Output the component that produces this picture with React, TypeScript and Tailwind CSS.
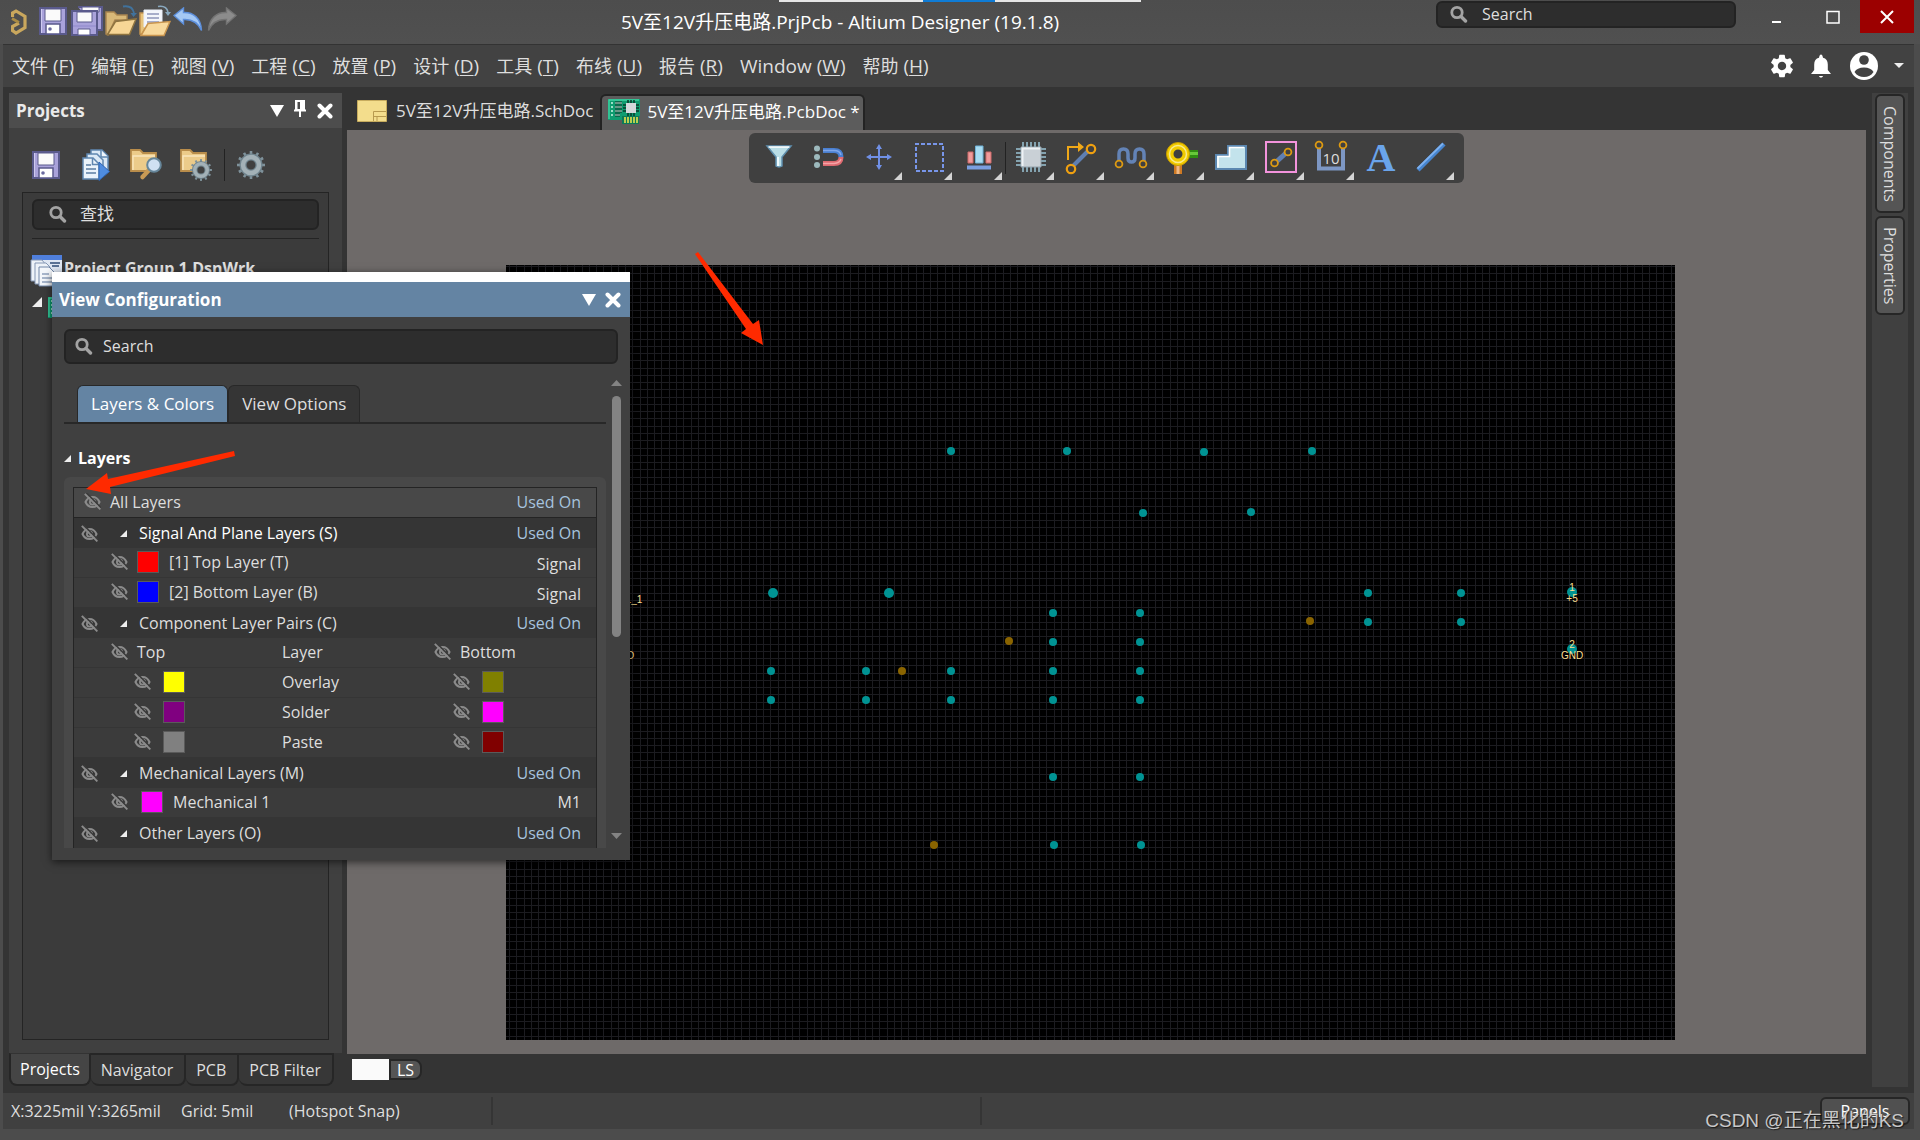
import React from "react";

type Svg = { className?: string };

/* ---------- small shared glyphs ---------- */

const SearchGlyph = ({ className = "" }: Svg) => (
  <svg viewBox="0 0 18 18" className={"h-[18px] w-[18px] shrink-0 " + className} aria-hidden="true">
    <circle cx="7" cy="7.500" r="5.2" fill="none" stroke="#a3a3a3" strokeWidth="2.800" />
    <path d="M11 11.500 15.500 16" stroke="#a3a3a3" strokeWidth="3.4" strokeLinecap="round" />
  </svg>
);

const HiddenEye = () => (
  <button type="button" aria-label="Toggle visibility" className="block shrink-0">
    <svg viewBox="0 0 17 17" className="h-[17px] w-[17px]" aria-hidden="true">
      <path d="M1.5 9C3 5.600 5.500 4 8.500 4S14 5.600 15.500 9C14 12.400 11.500 14 8.500 14S3 12.400 1.500 9Z" fill="none" stroke="#8b8b8b" strokeWidth="2" />
      <circle cx="8.5" cy="9" r="2.600" fill="none" stroke="#8b8b8b" strokeWidth="1.800" />
      <path d="M2.500 0 17 14.600" stroke="#3b3b3b" strokeWidth="1.600" />
      <path d="M.8 .8 16.400 16.400" stroke="#8b8b8b" strokeWidth="1.900" />
    </svg>
  </button>
);

const Expander = ({ className = "h-[7px] w-[7px]" }: Svg) => (
  <svg viewBox="0 0 8 8" className={"shrink-0 " + className} aria-hidden="true">
    <path d="M8 0V8H0Z" fill="#eeeeee" />
  </svg>
);

const DownMark = () => (
  <svg viewBox="0 0 14 12" className="h-3 w-3.5" aria-hidden="true">
    <path d="M0 0H14L7 12Z" fill="#fff" />
  </svg>
);

const CrossMark = () => (
  <svg viewBox="0 0 16 16" className="h-4 w-4" aria-hidden="true">
    <path d="M2.5 2.5 13.5 13.5M13.5 2.5 2.5 13.5" stroke="#fff" strokeWidth="4" strokeLinecap="round" />
  </svg>
);

/* ---------- title bar and panel icons ---------- */

const Logo = () => (
  <svg viewBox="0 0 16 26" className="h-[26px] w-4" aria-hidden="true">
    <path d="M1.500 8V4L5 2 14 7.500V18.500L5 24 1.500 21.500V17.500L8 14" fill="none" stroke="#c9a75d" strokeWidth="3.200" />
    <path d="M1 9.500 8 13.500" fill="none" stroke="#a98b45" strokeWidth="2.600" />
  </svg>
);

const DiskShape = () => (
  <>
    <path d="M1 1H27V27H1Z" fill="#a9a2da" stroke="#5a5a8c" strokeWidth="2" />
    <path d="M2.500 2V26" stroke="#cfcaf0" />
    <path d="M6 2H22V14H6Z" fill="#fafafa" stroke="#5a5a8c" />
    <path d="M7 17H21V27H7Z" fill="#fff" stroke="#5a5a8c" strokeWidth="1.500" />
    <circle cx="11" cy="22" r="1.800" fill="#6a6aa0" />
  </>
);

const Disk = () => (
  <svg viewBox="0 0 28 28" className="h-7 w-7" aria-hidden="true"><DiskShape /></svg>
);

const DiskPair = () => (
  <svg viewBox="0 0 32 30" className="h-[30px] w-8" aria-hidden="true">
    <path d="M7 1H31V24H27" fill="#a9a2da" stroke="#5a5a8c" strokeWidth="2" />
    <path d="M11 1H28V6H11Z" fill="#fafafa" stroke="#5a5a8c" />
    <path d="M1 5H26V29H1Z" fill="#a9a2da" stroke="#5a5a8c" strokeWidth="2" />
    <path d="M6 6H21V16H6Z" fill="#fafafa" stroke="#5a5a8c" />
    <path d="M2 20H25" stroke="#8f88cc" />
    <path d="M7 23H19V29H7Z" fill="#fff" stroke="#5a5a8c" />
  </svg>
);

const OpenFolder = () => (
  <svg viewBox="0 0 32 32" className="h-8 w-8" aria-hidden="true">
    <path d="M1 29V7H9L12 10H22V15H10L3 30Z" fill="#d8b878" stroke="#a98550" strokeWidth="1.500" />
    <path d="M2.500 29.500 10.500 16.500 31 14 24.500 29.500Z" fill="#f7d696" stroke="#8f7440" strokeWidth="1.500" />
    <path d="M18 1.500C24 .5 28 3 29 8" fill="none" stroke="#41729c" strokeWidth="1.800" />
    <path d="M25.500 8H32L28.500 12Z" fill="#41729c" />
  </svg>
);

const OpenProject = () => (
  <svg viewBox="0 0 32 32" className="h-8 w-8" aria-hidden="true">
    <path d="M1 29V8H8V20L3 29Z" fill="#e8c37a" stroke="#c39450" strokeWidth="1.500" />
    <path d="M5 5H23V22H5Z" fill="#f4f6fb" stroke="#e9eef8" />
    <path d="M8 9H20M8 13H20M8 17H20" stroke="#8f97bb" strokeWidth="1.600" />
    <path d="M2 30.500 9 18.500 31 16.500 25 30.500Z" fill="#f8d99c" stroke="#c9954e" strokeWidth="1.500" />
    <path d="M19 1.500C25 .5 28 3 29 7" fill="none" stroke="#89a8be" strokeWidth="1.600" />
    <path d="M26 7H32L29 11Z" fill="#89a8be" />
  </svg>
);

const CurvedArrow = ({ tone }: { tone: "blue" | "gray" }) => (
  <svg viewBox="0 0 30 25" className={tone === "gray" ? "h-[25px] w-[30px] -scale-x-100" : "h-[25px] w-[30px]"} aria-hidden="true">
    <path
      d="M1 8.500 10.500 1V5.500C20 5 28 11 28.500 23.500 25 15.500 19 12 10.500 12.500V17Z"
      fill={tone === "blue" ? "#a4c8f4" : "#8c8c8c"}
      stroke={tone === "blue" ? "#5d8fdb" : "#747474"}
      strokeWidth="1.400"
    />
  </svg>
);

const teeth = [0, 30, 60, 90, 120, 150, 180, 210, 240, 270, 300, 330];
const GearShape = () => (
  <>
    {teeth.map((a) => (
      <path key={a} d="M-1.300 -14H1.300V-10H-1.300Z" fill="#7f929b" transform={"rotate(" + a + ")"} />
    ))}
    <circle r="8" fill="none" stroke="#6f838d" strokeWidth="7" />
    <circle r="8" fill="none" stroke="#a3b1b7" strokeWidth="4.500" />
  </>
);

const Gear = () => (
  <svg viewBox="-14 -14 28 28" className="h-7 w-7" aria-hidden="true"><GearShape /></svg>
);

const CompileDocs = () => (
  <svg viewBox="0 0 28 32" className="h-8 w-7" aria-hidden="true">
    <path d="M9 1H20L26 7V23H9Z" fill="#dbe9f6" stroke="#5f86b0" strokeWidth="1.500" />
    <path d="M19 1V8H26" fill="#eef5fc" stroke="#5f86b0" strokeWidth="1.500" />
    <path d="M5 5H15L21 11V27H5Z" fill="#dbe9f6" stroke="#5f86b0" strokeWidth="1.500" />
    <path d="M1 9H11L17 15V30H1Z" fill="#eaf3fb" stroke="#5f86b0" strokeWidth="1.500" />
    <path d="M10.500 9V15.500H17" fill="none" stroke="#5f86b0" strokeWidth="1.500" />
    <path d="M4 16H9M4 20H14M4 24H14" stroke="#5b7da3" strokeWidth="1.600" />
    <path d="M17 13 27.500 22.500 17 31.500Z" fill="#4f8de0" stroke="#2f66b4" />
  </svg>
);

const FolderBase = () => (
  <>
    <path d="M1 22V1H10L13 4H26V22Z" fill="#eccb8a" stroke="#b98d4b" strokeWidth="1.800" />
    <path d="M3 21V7H25" fill="none" stroke="#f9e6bd" strokeWidth="1.400" />
  </>
);

const FolderSearch = () => (
  <svg viewBox="0 0 32 32" className="h-8 w-8" aria-hidden="true">
    <FolderBase />
    <path d="M19 21 12.500 28" stroke="#c89a55" strokeWidth="4.500" strokeLinecap="round" />
    <circle cx="24" cy="16" r="6.800" fill="#cfe0f2" stroke="#66869a" strokeWidth="2" />
  </svg>
);

const FolderGear = () => (
  <svg viewBox="0 0 32 32" className="h-8 w-8" aria-hidden="true">
    <FolderBase />
    <g transform="translate(21 21) scale(.78)"><circle r="8" fill="#404040" /><GearShape /></g>
  </svg>
);

const ProjectGroupIcon = () => (
  <svg viewBox="0 0 32 32" className="h-8 w-8 shrink-0" aria-hidden="true">
    <path d="M2 0H32V20H2Z" fill="#dfe7f3" />
    <path d="M2 0H32V5H2Z" fill="#4f7fdc" />
    <path d="M20 8H30M22 11H29" stroke="#5b7295" strokeWidth="2" />
    <path d="M1 5H12L16 10V26H1Z" fill="#eef3f9" stroke="#8597b4" />
    <path d="M5 8H16L20 12V29H5Z" fill="#eef3f9" stroke="#8597b4" />
    <path d="M9 12H19L25 18V31H9Z" fill="#f4f7fb" stroke="#7086a8" />
    <path d="M12 19H19M12 23H22M12 27H22" stroke="#8ea1bd" strokeWidth="1.500" />
  </svg>
);

const PcbIcon = () => (
  <svg viewBox="0 0 32 26" className="h-[26px] w-8 shrink-0" aria-hidden="true">
    <path d="M0 0H32V17H31V25H14V21H0Z" fill="#0f9c70" />
    <path d="M1 20V1H31" fill="none" stroke="#3fd3a3" strokeWidth="1.400" />
    <path d="M4 3V19" stroke="#c9f5e4" strokeWidth="1.500" strokeDasharray="2 2" />
    <path d="M7 4H14M7 8H14M7 12H14M7 16H12" stroke="#07382a" strokeWidth="3" />
    <path d="M7 4H14M7 8H14M7 12H14M7 16H12" stroke="#c9f5e4" />
    <path d="M20 1V17M23 1V17M26 1V17M15 6H31M15 9H31M15 12H31" stroke="#07382a" strokeWidth="1.500" />
    <path d="M18 4H28V14H18Z" fill="#d3d8db" />
    <path d="M14 17H31V25H14Z" fill="#0c7a57" />
    <path d="M17 18V24M20 18V24M23 18V24M26 18V24M29 18V24" stroke="#f2e94e" strokeWidth="1.500" />
  </svg>
);

const SchematicIcon = () => (
  <svg viewBox="0 0 30 22" className="h-[22px] w-[30px] shrink-0" aria-hidden="true">
    <path d="M.5 .5H29.500V21.500H.5Z" fill="#f3dd8c" stroke="#c7ac5e" />
    <path d="M16.500 21V11.500H29M16.500 16.500H29M20 16.500V21" fill="none" stroke="#b89a4e" />
  </svg>
);

/* ---------- canvas tools ---------- */

const Ring = ({ x, y }: { x: number; y: number }) => (
  <circle cx={x} cy={y} r="3.400" fill="#404040" stroke="#dd9a12" strokeWidth="1.800" />
);

const tools: { name: string; more: boolean; art: React.ReactNode }[] = [
  { name: "Filter", more: false, art: <><path d="M4 5H28L19 16V25Q16 27 13 25V16Z" fill="#b9dde6" stroke="#5f8fae" strokeWidth="1.500" /><path d="M5.500 6H26.500" stroke="#fff" strokeWidth="1.500" /><path d="M15 16V25" stroke="#eefafd" strokeWidth="2" /></> },
  { name: "Snap", more: false, art: <><circle cx="4" cy="7.500" r="3" fill="#9db9bd" /><circle cx="4" cy="16" r="3" fill="#9db9bd" /><circle cx="4" cy="24" r="3" fill="#9db9bd" /><path d="M10 9.500H21Q28 9.500 28 16" fill="none" stroke="#4a7fd0" strokeWidth="5" /><path d="M10 22.500H21Q28 22.500 28 16" fill="none" stroke="#de6a70" strokeWidth="5" /><path d="M10 9.500H21Q27 9.500 28 14" fill="none" stroke="#7fa6ea" strokeWidth="1.500" /><path d="M10 22.500H21Q27 22 28 18" fill="none" stroke="#f4a4a6" strokeWidth="1.500" /></> },
  { name: "Move", more: true, art: <><path d="M16 5V27M5 16H27" stroke="#7090e6" strokeWidth="2" /><path d="M16 3 19 8H13ZM16 29 19 24H13ZM3 16 8 13V19ZM29 16 24 13V19Z" fill="#7090e6" /></> },
  { name: "Select", more: true, art: <path d="M3 3H30V30H3Z" fill="none" stroke="#7896ea" strokeWidth="2" strokeDasharray="4 2" strokeDashoffset="1" /> },
  { name: "Align", more: true, art: <><path d="M5 11H10V22H5Z" fill="#ef9a9a" stroke="#d06a6a" /><path d="M23 11H28V22H23Z" fill="#ef9a9a" stroke="#d06a6a" /><path d="M12.500 5H20V22H12.500Z" fill="#a9dcf2" stroke="#6fb1d6" /><path d="M4 26.500H28" stroke="#7b9fe0" strokeWidth="4" /></> },
  { name: "Component", more: true, art: <><path d="M8 1V31M12 1V31M16 1V31M20 1V31M24 1V31M1 8H31M1 12H31M1 16H31M1 20H31M1 24H31" stroke="#84a3b0" strokeWidth="2" /><path d="M6 6H26V26H6Z" fill="#c9d0d6" stroke="#93a4ae" /><path d="M7.500 25V7.500H25" fill="none" stroke="#eef2f5" strokeWidth="2" /></> },
  { name: "Route", more: true, art: <><path d="M7 26 24 9" stroke="#5f7fb2" strokeWidth="4" /><path d="M3 19V6H14" fill="none" stroke="#f0a818" strokeWidth="2" /><path d="M13 1 19 6 13 11Z" fill="#f0a818" /><circle cx="26" cy="8" r="4.200" fill="#404040" stroke="#f0a010" strokeWidth="2.200" /><circle cx="6" cy="28" r="4.200" fill="#404040" stroke="#f0a010" strokeWidth="2.200" /></> },
  { name: "Tune length", more: true, art: <><path d="M4 21V13Q4 8 8.500 8T13 13V17Q13 21 16.500 21T20 17V13Q20 8 24.500 8T29 13V21" fill="none" stroke="#6383b6" strokeWidth="3.500" /><Ring x={4} y={23} /><Ring x={28} y={23} /></> },
  { name: "Via", more: true, art: <><path d="M13 20V33" stroke="#cf7a24" strokeWidth="8" /><path d="M13 20V33" stroke="#f0b883" strokeWidth="3" /><path d="M24 13H33" stroke="#2f8d12" strokeWidth="8" /><path d="M24 12.500H33" stroke="#67c83a" strokeWidth="3" /><circle cx="13" cy="13" r="8" fill="none" stroke="#f1cb00" strokeWidth="7" /><circle cx="13" cy="13" r="11.500" fill="none" stroke="#c79b00" /><circle cx="13" cy="13" r="8.500" fill="none" stroke="#f9ea8e" strokeWidth="1.500" /></> },
  { name: "Polygon", more: true, art: <><path d="M1 28V14H13V5H31V28Z" fill="#c3e3ec" stroke="#5b87b0" strokeWidth="2" /><path d="M3 26.500V15.500H14.500V6.500H29" fill="none" stroke="#fff" strokeWidth="1.600" /></> },
  { name: "Line in box", more: true, art: <><path d="M1 1H31V31H1Z" fill="none" stroke="#f393dc" strokeWidth="2" /><path d="M10 22 21 12" stroke="#5f7fb2" strokeWidth="5" /><Ring x={9.500} y={22} /><Ring x={23} y={11} /></> },
  { name: "Dimension", more: true, art: <><path d="M4 6V27.500H28V6" fill="none" stroke="#7d97c4" strokeWidth="4" /><Ring x={4} y={4} /><Ring x={28} y={4} /><text x="16" y="23" textAnchor="middle" fontSize="15" fill="#dedede" className="font-['Open_Sans',sans-serif]">10</text></> },
  { name: "String", more: false, art: <text x="16" y="30" textAnchor="middle" fontSize="40" fontWeight="700" fill="#6aa4ea" className="font-['Liberation_Serif',serif]">A</text> },
  { name: "Line", more: true, art: <><path d="M3 29 29 3" stroke="#4785cf" strokeWidth="4.500" /><path d="M2.500 27.500 28 2.500" stroke="#7db1f0" strokeWidth="1.800" /></> },
];

const ToolButton = ({ index }: { index: number }) => {
  const t = tools[index];
  return (
    <button type="button" aria-label={t.name} className="relative flex h-[50px] w-[50px] shrink-0 items-start justify-center pt-2">
      <svg viewBox="0 0 32 32" className="h-8 w-8 overflow-visible" aria-hidden="true">{t.art}</svg>
      {t.more && (
        <svg viewBox="0 0 8 8" className="absolute right-0.5 bottom-[3px] h-2 w-2" aria-hidden="true">
          <path d="M8 0V8H0Z" fill="#d4d4d4" />
        </svg>
      )}
    </button>
  );
};

/* ---------- board ---------- */

const GRID = 7.261;
const columns = Array.from({ length: 161 }, (_, i) => Math.round(3 + i * GRID));
const rows = Array.from({ length: 107 }, (_, i) => Math.round(1 + i * GRID));

/* x, y, radius; board coordinates */
const pads: [number, number, number][] = [
  [445, 186, 4], [561, 186, 4], [698, 187, 4], [806, 186, 4], [637, 248, 4], [745, 247, 4],
  [267, 328, 5], [383, 328, 5], [862, 328, 4], [955, 328, 4], [862, 357, 4], [955, 357, 4],
  [547, 348, 4], [547, 377, 4], [547, 406, 4], [547, 435, 4], [547, 512, 4], [548, 580, 4],
  [634, 348, 4], [634, 377, 4], [634, 406, 4], [634, 435, 4], [634, 512, 4], [635, 580, 4],
  [265, 406, 4], [265, 435, 4], [360, 406, 4], [360, 435, 4], [445, 406, 4], [445, 435, 4],
  [1066, 327, 5], [1066, 384, 5],
];
const vias: [number, number][] = [[804, 356], [503, 376], [396, 406], [428, 580]];

const Board = () => (
  <svg className="block h-full w-full bg-black" aria-label="PCB layout">
    <path d={columns.map((x) => `M${x} 0h1v2000h-1z`).join("")} fill="#1c1c20" shapeRendering="crispEdges" />
    <path d={rows.map((y) => `M0 ${y}h3000v1h-3000z`).join("")} fill="#1c1c20" shapeRendering="crispEdges" />
    {pads.map(([x, y, r], i) => <circle key={i} cx={x} cy={y} r={r} fill="#009393" />)}
    {vias.map(([x, y], i) => <circle key={i} cx={x} cy={y} r="4" fill="#8a6400" />)}
    <g fill="#fcdf8f" fontSize="10" textAnchor="middle" className="font-['Liberation_Sans',sans-serif]">
      <text x="1066" y="326">1</text>
      <text x="1066" y="337">+5</text>
      <text x="1066" y="383">2</text>
      <text x="1066" y="394">GND</text>
      <text x="128" y="338">1_1</text>
      <text x="117" y="394">GND</text>
    </g>
  </svg>
);

/* ---------- layer list ---------- */

const Swatch = ({ color, className = "" }: { color: string; className?: string }) => (
  <button type="button" aria-label="Layer color" style={{ backgroundColor: color }} className={"h-[22px] w-[22px] shrink-0 border border-[#5a5a5a] " + className} />
);

const GroupRow = ({ label, bright }: { label: string; bright?: boolean }) => (
  <li className="flex h-[30px] items-center bg-[#353535] pr-[15px] pl-[7px]">
    <HiddenEye />
    <Expander className="ml-[22px] h-[7px] w-[7px]" />
    <span className={bright ? "ml-3 flex-1 text-white" : "ml-3 flex-1"}>{label}</span>
    <a href="#used-on" className="text-[#a6c3de]">Used On</a>
  </li>
);

const LayerRow = ({ color, label, kind, indent }: { color: string; label: string; kind: string; indent?: boolean }) => (
  <li className="flex h-[30px] items-center border-b border-[#353535] bg-[#3b3b3b] pr-[15px] pb-0.5 pl-[37px]">
    <HiddenEye />
    <Swatch color={color} className={indent ? "ml-[13px]" : "ml-[9px]"} />
    <span className="ml-[10px] flex-1">{label}</span>
    <span className={indent ? "" : "pt-1"}>{kind}</span>
  </li>
);

const PairRow = ({ top, label, bottom }: { top: string; label: string; bottom: string }) => (
  <li className="grid h-[30px] grid-cols-[208px_1fr_218px] items-center border-b border-[#353535] bg-[#3b3b3b] pb-0.5">
    <span className="flex items-center gap-3 pl-[60px]"><HiddenEye /><Swatch color={top} /></span>
    <span>{label}</span>
    <span className="flex items-center gap-3 pl-[75px]"><HiddenEye /><Swatch color={bottom} /></span>
  </li>
);

const PanelSearch = ({ text, label, className = "" }: { text: string; label: string; className?: string }) => (
  <label className={"flex items-center rounded-md border-2 border-[#232323] bg-[#2d2d2d] pb-0.5 " + className}>
    <SearchGlyph />
    <input aria-label={label} placeholder={text} className="min-w-0 flex-1 bg-transparent outline-none placeholder:text-[#dedede]" />
  </label>
);

const ViewConfiguration = () => (
  <section aria-label="View Configuration" className="absolute top-[272px] left-[52px] flex h-[588px] w-[578px] flex-col border-t-[10px] border-white bg-[#404040] shadow-[0_2px_8px_rgba(0,0,0,0.6)]">
    <header className="flex h-[35px] shrink-0 items-center bg-[#6484a3] pr-[9px] pl-[7px] text-white">
      <h2 className="flex-1 text-[17px] font-bold">View Configuration</h2>
      <button type="button" aria-label="Panel menu" className="mr-[9px]"><DownMark /></button>
      <button type="button" aria-label="Close"><CrossMark /></button>
    </header>
    <PanelSearch text="Search" label="Search settings" className="mx-3 mt-3 h-[35px] shrink-0 gap-[10px] pl-[9px]" />
    <div className="mt-4 mb-3 flex min-h-0 flex-1 pr-2 pl-3">
      <div className="flex min-w-0 flex-1 flex-col">
        <div role="tablist" className="flex h-11 shrink-0 items-end border-b-2 border-[#282828] pl-[13px]">
          <button type="button" role="tab" aria-selected="true" className="h-[37px] rounded-t-md border border-b-0 border-[#282828] bg-[#6484a3] px-[13px] text-[17px] text-white">Layers &amp; Colors</button>
          <button type="button" role="tab" aria-selected="false" className="h-[37px] rounded-t-md border border-b-0 border-[#282828] bg-[#353535] px-[13px] text-[17px]">View Options</button>
        </div>
        <h3 className="mt-[22px] flex h-6 shrink-0 items-center gap-[7px] font-bold text-white"><Expander />Layers</h3>
        <div className="mt-[7px] flex min-h-0 flex-1 flex-col rounded-t-md bg-[#484848] px-[9px] pt-[10px]">
          <ul className="min-h-0 flex-1 overflow-hidden border-x border-[#242424]">
            <li className="flex h-[31px] items-center border-y border-[#242424] bg-[#484848] pr-[15px] pb-0.5 pl-[10px]">
              <HiddenEye />
              <span className="ml-[9px] flex-1">All Layers</span>
              <a href="#used-on" className="text-[#a6c3de]">Used On</a>
            </li>
            <GroupRow label="Signal And Plane Layers (S)" bright />
            <LayerRow color="#ff0000" label="[1] Top Layer (T)" kind="Signal" />
            <LayerRow color="#0000ff" label="[2] Bottom Layer (B)" kind="Signal" />
            <GroupRow label="Component Layer Pairs (C)" />
            <li className="grid h-[30px] grid-cols-[208px_1fr_218px] items-center border-b border-[#353535] bg-[#3b3b3b] pb-0.5">
              <span className="flex items-center gap-[9px] pl-[37px]"><HiddenEye />Top</span>
              <span>Layer</span>
              <span className="flex items-center gap-[9px] pl-[56px]"><HiddenEye />Bottom</span>
            </li>
            <PairRow top="#ffff00" label="Overlay" bottom="#808000" />
            <PairRow top="#800080" label="Solder" bottom="#ff00ff" />
            <PairRow top="#808080" label="Paste" bottom="#800000" />
            <GroupRow label="Mechanical Layers (M)" />
            <LayerRow color="#ff00ff" label="Mechanical 1" kind="M1" indent />
            <GroupRow label="Other Layers (O)" />
          </ul>
        </div>
      </div>
      <div className="ml-[5px] flex w-[11px] flex-col items-center pb-[9px]">
        <svg viewBox="0 0 11 6" className="h-1.5 w-[11px] shrink-0" aria-hidden="true"><path d="M0 6 5.500 0 11 6Z" fill="#838383" /></svg>
        <div className="mt-[10px] h-[241px] w-[9px] rounded-full bg-[#838383]" />
        <div className="flex-1" />
        <svg viewBox="0 0 11 6" className="h-1.5 w-[11px] shrink-0" aria-hidden="true"><path d="M0 0H11L5.500 6Z" fill="#838383" /></svg>
      </div>
    </div>
  </section>
);

/* ---------- page ---------- */

const menus: [string, string][] = [
  ["文件", "F"], ["编辑", "E"], ["视图", "V"], ["工程", "C"], ["放置", "P"], ["设计", "D"],
  ["工具", "T"], ["布线", "U"], ["报告", "R"], ["Window", "W"], ["帮助", "H"],
];

const IconButton = ({ label, children }: { label: string; children: React.ReactNode }) => (
  <button type="button" aria-label={label} className="block shrink-0">{children}</button>
);

const panelTabs = ["Projects", "Navigator", "PCB", "PCB Filter"];

export default function App() {
  return (
    <div className="relative flex h-screen flex-col overflow-hidden bg-[#4c4c4c] font-['Open_Sans','Noto_Sans_CJK_SC',sans-serif] text-[16px] leading-6 text-[#dedede]">
      <header className="flex h-[44px] shrink-0 items-start bg-linear-to-b from-[#4d4d4d] to-[#505050] pr-[6px] pl-[11px]">
        <div className="flex w-[225px] items-start pt-[5px]">
          <span className="mt-1 mr-3 block"><Logo /></span>
          <span className="mt-0.5 mr-1 block"><IconButton label="Save"><Disk /></IconButton></span>
          <span className="mt-px mr-0.5 block"><IconButton label="Save all"><DiskPair /></IconButton></span>
          <span className="mr-0.5 block"><IconButton label="Open"><OpenFolder /></IconButton></span>
          <span className="mr-0.5 block"><IconButton label="Open project"><OpenProject /></IconButton></span>
          <span className="mt-0.5 mr-1 block"><IconButton label="Undo"><CurvedArrow tone="blue" /></IconButton></span>
          <span className="mt-0.5 block"><IconButton label="Redo"><CurvedArrow tone="gray" /></IconButton></span>
        </div>
        <h1 className="flex-1 pt-[10px] pl-2 text-center text-[19px] text-white">5V至12V升压电路.PrjPcb - Altium Designer (19.1.8)</h1>
        <PanelSearch text="Search" label="Search application" className="mt-px h-[27px] w-[300px] gap-[14px] pl-3" />
        <div className="ml-4 flex h-[33px]">
          <button type="button" aria-label="Minimize" className="flex w-[54px] items-center justify-center pr-1">
            <svg viewBox="0 0 14 14" className="h-3.5 w-3.5"><path d="M2 12H11" stroke="#fff" strokeWidth="2" /></svg>
          </button>
          <button type="button" aria-label="Maximize" className="flex w-[54px] items-center justify-center">
            <svg viewBox="0 0 14 14" className="h-3.5 w-3.5"><path d="M1 1.500H13V13H1Z" fill="none" stroke="#fff" strokeWidth="1.500" /></svg>
          </button>
          <button type="button" aria-label="Close window" className="flex w-[54px] items-center justify-center bg-[#9c0000]">
            <svg viewBox="0 0 14 14" className="h-3.5 w-3.5"><path d="M1 1 13 13M13 1 1 13" stroke="#fff" strokeWidth="2" /></svg>
          </button>
        </div>
      </header>

      <div className="mr-[6px] mb-[11px] ml-[3px] flex min-h-0 flex-1 flex-col border-t border-[#333] bg-[#343434]">
        <nav className="flex h-[42px] shrink-0 items-center gap-[17px] bg-[#424242] pr-[10px] pl-[9px] text-[19px]">
          {menus.map(([name, key]) => (
            <button key={key} type="button" className="flex gap-[5px] whitespace-nowrap">
              <span className={name === "Window" ? "" : "text-[18px]"}>{name}</span>
              <span>(<u className="underline-offset-2">{key}</u>)</span>
            </button>
          ))}
          <div className="ml-auto flex items-center">
            <IconButton label="Settings">
              <svg viewBox="0 0 24 24" className="h-7 w-7"><path fill="#fff" d="M19.140 12.940c.04-.3.060-.61.060-.94 0-.32-.02-.64-.07-.94l2.030-1.580c.18-.14.230-.41.120-.61l-1.920-3.320c-.12-.22-.37-.29-.59-.22l-2.390.96c-.5-.38-1.030-.7-1.620-.94l-.36-2.540c-.04-.24-.24-.41-.48-.41h-3.840c-.24 0-.43.170-.47.410l-.36 2.540c-.59.240-1.130.570-1.620.940l-2.390-.96c-.22-.08-.47 0-.59.220L2.740 8.870c-.12.210-.08.470.120.610l2.030 1.580c-.05.3-.09.630-.09.940s.02.640.070.940l-2.030 1.580c-.18.140-.23.410-.12.610l1.920 3.320c.12.220.370.290.590.220l2.390-.96c.5.380 1.030.7 1.620.940l.36 2.540c.05.240.240.410.480.410h3.840c.24 0 .440-.17.470-.41l.36-2.540c.59-.24 1.130-.56 1.620-.94l2.390.96c.22.080.470 0 .590-.22l1.920-3.320c.12-.22.070-.47-.12-.61l-2.010-1.580zM12 15.600c-1.980 0-3.600-1.620-3.600-3.600s1.620-3.600 3.600-3.600 3.600 1.620 3.600 3.600-1.620 3.600-3.600 3.600z" /></svg>
            </IconButton>
            <span className="ml-[13px] block"><IconButton label="Notifications">
              <svg viewBox="0 0 24 24" className="h-6 w-6"><path fill="#fff" d="M12 23.500c1.100 0 2-.7 2-1.500h-4c0 .8.900 1.500 2 1.500zM18.800 16v-5.500c0-3.500-1.700-6-4.800-6.700C13.500 1.600 13 .5 12 .5s-1.500 1.100-2 3.300C6.900 4.500 5.200 7 5.200 10.500V16L2 20h20z" /></svg>
            </IconButton></span>
            <span className="ml-[17px] block"><IconButton label="Account">
              <svg viewBox="0 0 28 28" className="h-7 w-7"><circle cx="14" cy="14" r="14" fill="#fff" /><circle cx="14" cy="8" r="4.800" fill="#424242" /><path d="M4.500 20C6 17 9.500 15.500 14 15.500S22 17 23.500 20C21.500 23.500 18 25 14 25S6.500 23.500 4.500 20Z" fill="#424242" /></svg>
            </IconButton></span>
            <span className="ml-4 block"><IconButton label="Account menu">
              <svg viewBox="0 0 10 6" className="h-1.5 w-2.5"><path d="M0 0H10L5 5Z" fill="#eee" /></svg>
            </IconButton></span>
          </div>
        </nav>

        <div className="flex min-h-0 flex-1 px-[6px] pt-[6px]">
          <aside className="flex w-[333px] shrink-0 flex-col">
            <header className="flex h-[35px] shrink-0 items-center bg-[#4d4d4d] pr-[9px] pl-[7px] text-white">
              <h2 className="flex-1 text-[17px] font-bold text-[#eaeaea]">Projects</h2>
              <button type="button" aria-label="Panel menu"><DownMark /></button>
              <button type="button" aria-label="Pin panel" className="mr-[11px] ml-[10px] pb-1">
                <svg viewBox="0 0 12 17" className="h-[17px] w-3"><path d="M1 0H11V10H1Z" fill="#fff" /><path d="M3.500 2H6V9H3.500Z" fill="#4d4d4d" /><path d="M0 10.500H12M6 10V17" stroke="#fff" strokeWidth="2" /></svg>
              </button>
              <button type="button" aria-label="Close panel"><CrossMark /></button>
            </header>
            <div className="flex min-h-0 flex-1 flex-col bg-[#404040] px-[13px] pb-[13px]">
              <div className="flex h-[64px] shrink-0 items-center pt-2.5 pl-[10px]">
                <IconButton label="Save project"><Disk /></IconButton>
                <span className="ml-[22px]"><IconButton label="Compile"><CompileDocs /></IconButton></span>
                <span className="ml-5"><IconButton label="Find project"><FolderSearch /></IconButton></span>
                <span className="ml-[18px]"><IconButton label="Project options"><FolderGear /></IconButton></span>
                <span className="mx-[12px] h-8 w-px bg-[#222]" />
                <IconButton label="Settings"><Gear /></IconButton>
              </div>
              <div className="flex min-h-0 flex-1 flex-col border border-[#242424] bg-[#3b3b3b] px-[9px] pt-[6px]">
                <PanelSearch text="查找" label="查找" className="h-[31px] shrink-0 gap-[13px] pl-[15px] text-[17px]" />
                <div className="mt-2 h-px shrink-0 bg-[#242424]" />
                <div className="mt-4 -ml-0.5 flex shrink-0 gap-0.5 font-bold text-[#e0e0e0]"><ProjectGroupIcon /><span className="pt-px">Project Group 1.DsnWrk</span></div>
                <div className="mt-[10px] flex shrink-0 gap-1.5"><Expander className="h-2.5 w-2.5" /><PcbIcon /></div>
              </div>
            </div>
            <div role="tablist" className="flex h-[40px] shrink-0 items-start">
              {panelTabs.map((t, i) => (
                <button
                  key={t}
                  type="button"
                  role="tab"
                  aria-selected={i === 0}
                  className={
                    i === 0
                      ? "h-[33px] rounded-b-lg border-2 border-t border-[#262626] border-t-[#333] bg-[#454545] px-[9px] text-white"
                      : "h-[33px] rounded-b-lg border-2 border-l-0 border-[#262626] bg-[#373737] pr-[11px] pl-[10px]"
                  }
                >
                  {t}
                </button>
              ))}
            </div>
          </aside>

          <main className="ml-[5px] flex min-w-0 flex-1 flex-col">
            <div role="tablist" className="flex h-[37px] shrink-0 items-end pl-[10px]">
              <button type="button" role="tab" aria-selected="false" className="flex h-[36px] items-center gap-[9px] pr-[6px] pb-0.5 text-[17px] whitespace-nowrap">
                <SchematicIcon />5V至12V升压电路.SchDoc
              </button>
              <button type="button" role="tab" aria-selected="true" className="flex h-[36px] items-center gap-2 rounded-t-md border-2 border-b-0 border-[#232323] bg-[#5c5c5c] pr-[3px] pb-[3px] pl-[6px] text-[17px] whitespace-nowrap text-white">
                <PcbIcon />5V至12V升压电路.PcbDoc *
              </button>
            </div>
            <div className="relative flex min-h-0 flex-1 bg-[#6e6a69] pt-[135px] pr-[191px] pb-[14px] pl-[159px]">
              <div className="absolute inset-x-0 top-[3px] flex justify-center">
                <div role="toolbar" aria-label="Placement tools" className="flex h-[50px] items-center rounded-md bg-[#404040] pr-2 pl-[5px]">
                  {[0, 1, 2, 3, 4].map((i) => <ToolButton key={i} index={i} />)}
                  <span className="ml-px h-8 w-px bg-[#222]" />
                  {[5, 6, 7, 8, 9, 10, 11, 12, 13].map((i) => <ToolButton key={i} index={i} />)}
                </div>
              </div>
              <Board />
            </div>
            <div className="flex h-[39px] shrink-0 items-start pt-[5px] pl-[5px]">
              <button type="button" aria-label="Current layer color" className="h-[21px] w-[37px] bg-[#fafafa]" />
              <button type="button" className="h-[21px] rounded-r-lg border-2 border-[#262626] bg-[#555] px-[6px] leading-[19px] text-white">LS</button>
            </div>
          </main>

          <aside className="mb-[6px] ml-[6px] flex w-9 shrink-0 flex-col gap-[3px] bg-[#404040] px-[3px] pt-px">
            <button type="button" className="h-[119px] rounded-md border-2 border-[#262626] bg-[#555] [writing-mode:vertical-rl]">Components</button>
            <button type="button" className="h-[99px] rounded-md border-2 border-[#262626] bg-[#555] [writing-mode:vertical-rl]">Properties</button>
          </aside>
        </div>

        <footer className="flex h-[36px] shrink-0 items-center bg-[#404040] pr-1 pl-2">
          <span className="w-[170px]">X:3225mil Y:3265mil</span>
          <span className="w-[108px]">Grid: 5mil</span>
          <span className="w-[202px]">(Hotspot Snap)</span>
          <span className="h-7 w-0.5 bg-[#353535]" />
          <span className="ml-[487px] h-7 w-0.5 bg-[#353535]" />
          <button type="button" className="ml-auto h-7 w-[90px] rounded-md border-2 border-[#262626] bg-[#505050] text-white">Panels</button>
        </footer>
      </div>

      <div className="absolute top-0 left-[779px] flex h-0.5 w-[362px]">
        <span className="w-[144px] bg-[#e6e6e6]" /><span className="w-[72px] bg-[#0f7cd6]" /><span className="flex-1 bg-[#e6e6e6]" />
      </div>

      <ViewConfiguration />

      <svg className="pointer-events-none absolute inset-0 h-full w-full" aria-hidden="true">
        <path d="M234 451 235 456 110 487 111 494 86 489 107 473 108 479Z" fill="#ff2a00" />
        <path d="M695 254 698 252 753 324 759 320 763 345 741 333 746 329Z" fill="#ff2a00" />
      </svg>
      <p className="pointer-events-none absolute right-[16px] bottom-[7px] text-[19px] text-[#c8c8c8] [text-shadow:1px_1px_1px_rgba(0,0,0,0.6)] font-['Liberation_Sans','Noto_Sans_CJK_SC',sans-serif]">CSDN @正在黑化的KS</p>
    </div>
  );
}
